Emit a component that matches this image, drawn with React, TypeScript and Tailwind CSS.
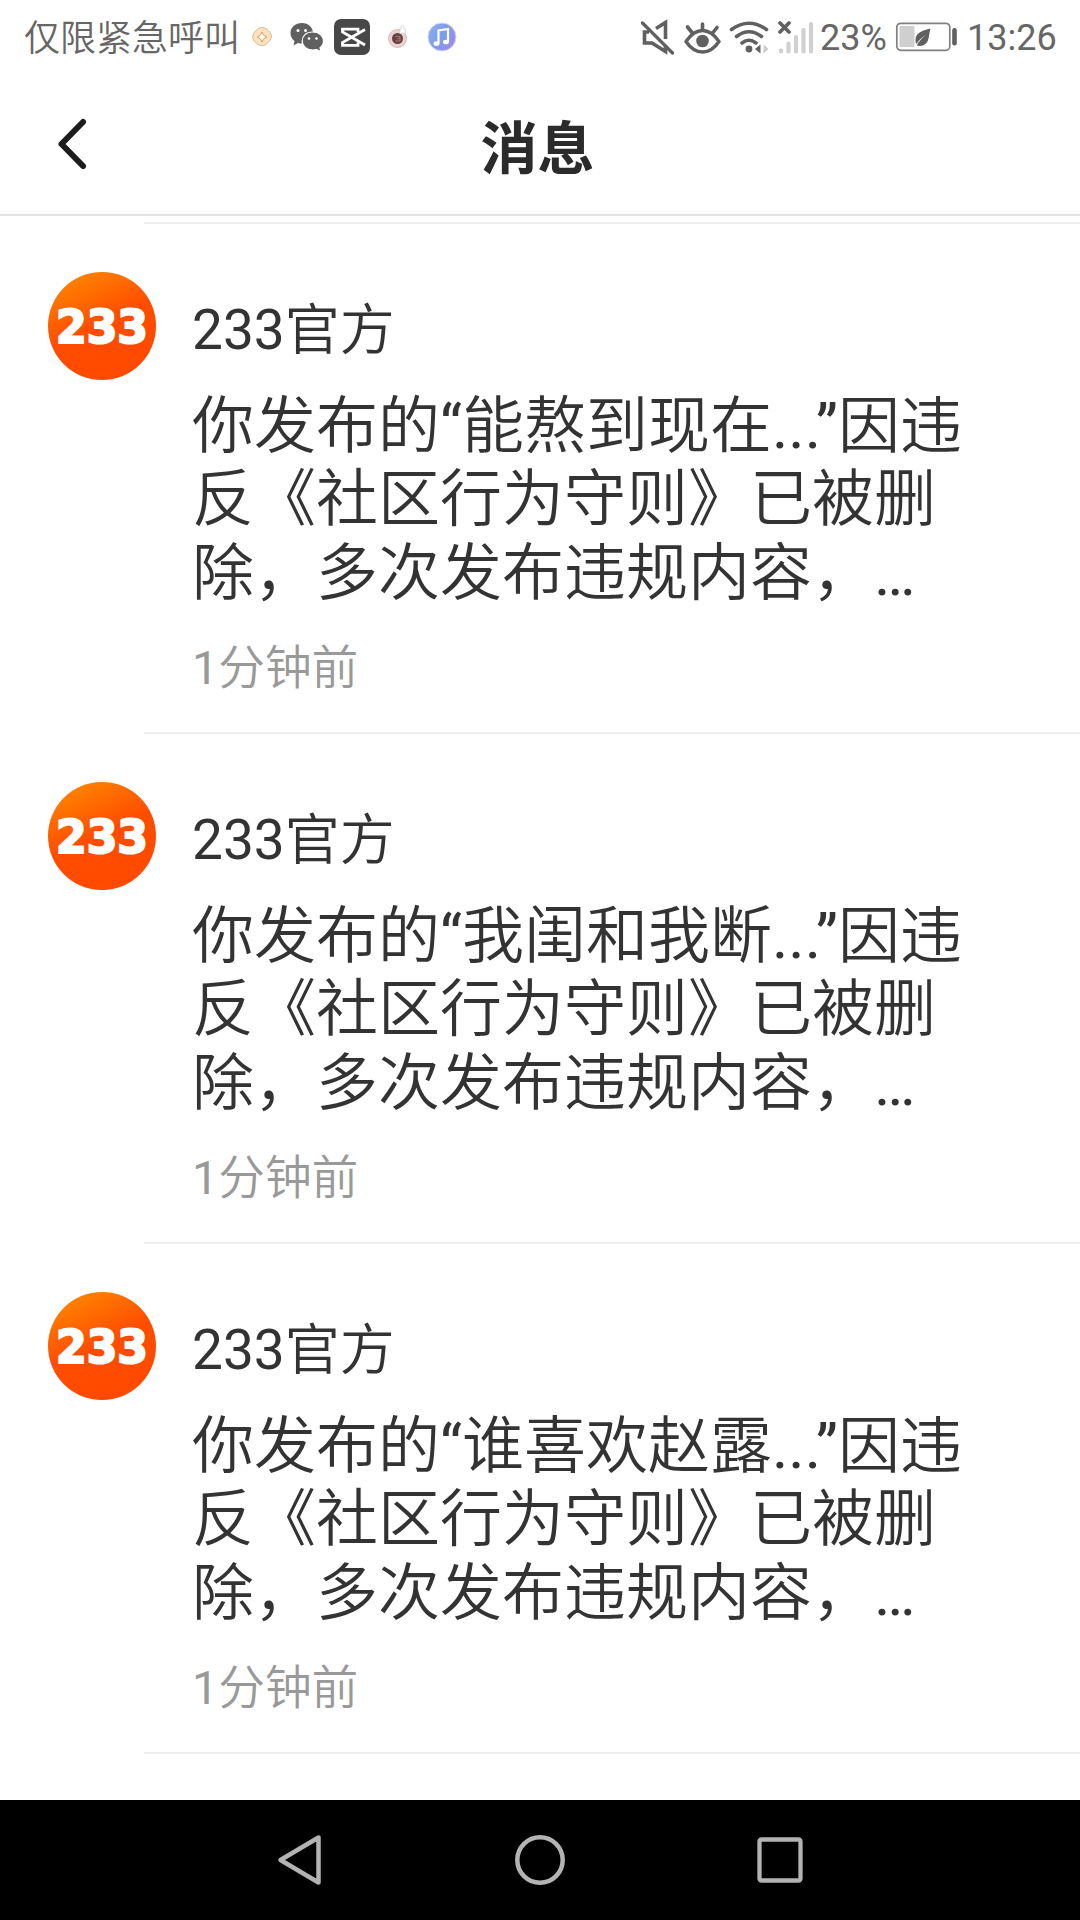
import React from "react";

const messages = [
  { id: 1, topic: "能熬到现在" },
  { id: 2, topic: "我闺和我断" },
  { id: 3, topic: "谁喜欢赵露" },
];

function CoinIcon() {
  return (
    <svg className="ml-[17px] h-[22px] w-[22px] shrink-0" viewBox="0 0 22 22">
      <path d="M7 2.500 Q11 0.500 15 2.500 Q21 7 20.500 11 Q20.500 14 15 18.500 Q11 21 7 18.500 Q1.500 15 1.500 11 Q1.500 7 7 2.500Z" fill="#fbe3c0" stroke="#dfb994" strokeWidth="1" />
      <path d="M11 6 Q12 10 16 11 Q12 12 11 16 Q10 12 6 11 Q10 10 11 6Z" fill="#fffaf0" stroke="#d6a36f" strokeWidth="1" />
    </svg>
  );
}

function WechatIcon() {
  return (
    <svg className="ml-[17px] h-[36px] w-[34px] shrink-0" viewBox="0 0 34 36">
      <path d="M12 4 C5 4 0.5 8.500 0.5 14 C0.500 17.500 2 20 4.500 22 L3.500 26.500 L8 24 C9.500 24.500 11 24.500 12.500 24.500 C19 24.500 23 20 23 14 C23 8.500 18.500 4 12 4Z" fill="#606060" />
      <path d="M22.500 13 C16 13 12.200 17 12.200 22 C12.200 27 16.500 31 22.500 31 C24 31 25.500 30.800 26.500 30.500 L31 32.800 L30 28.800 C32.300 27 33.500 24.500 33.500 22 C33.500 17 29 13 22.500 13Z" fill="#606060" stroke="#fff" strokeWidth="1.200" />
      <g fill="#fff">
        <circle cx="8" cy="11.500" r="1.500" />
        <circle cx="15.500" cy="11.500" r="1.500" />
        <circle cx="19" cy="19.500" r="1.300" />
        <circle cx="26.500" cy="19.500" r="1.300" />
      </g>
    </svg>
  );
}

function ClipIcon() {
  return (
    <svg className="ml-[10px] h-[36px] w-[36px] shrink-0" viewBox="0 0 36 36">
      <rect width="36" height="36" rx="7" fill="#474747" />
      <path d="M24 13 V10.200 H8.500 V13 L31 26 M24 23.500 V26.300 H8.500 V23.500 L31 10.500" fill="none" stroke="#fff" strokeWidth="2.800" />
    </svg>
  );
}

function RecorderIcon() {
  return (
    <svg className="ml-[17px] h-[26px] w-[21px] shrink-0" viewBox="0 0 21 26">
      <circle cx="10.500" cy="14.500" r="9" fill="#ead3d0" stroke="#dabbb7" />
      <circle cx="10.500" cy="14.500" r="5.500" fill="#664140" />
      <path d="M8.500 12.500 H13 V17 H8.500 M10 14.700 H13" fill="none" stroke="#a97b76" strokeWidth="1" />
      <path d="M13 9.500 V5 H14 V2 H17 V5 H18.500 V9.500Z" fill="#fff" stroke="#d4cfce" strokeWidth="0.700" />
    </svg>
  );
}

function MusicIcon() {
  return (
    <svg className="ml-[19px] h-[30px] w-[30px] shrink-0" viewBox="0 0 30 30">
      <defs>
        <linearGradient id="music" x1="0" y1="0" x2="1" y2="0.700">
          <stop offset="0" stopColor="#8bb0f0" />
          <stop offset="0.550" stopColor="#7c9ee8" />
          <stop offset="1" stopColor="#9b8be8" />
        </linearGradient>
      </defs>
      <circle cx="15" cy="15" r="14" fill="url(#music)" stroke="#e3cdfb" strokeWidth="1" />
      <path d="M11.500 21 V8.500 L21 7 V19.500" fill="none" stroke="#fff" strokeWidth="2.200" />
      <ellipse cx="9.500" cy="21.500" rx="3" ry="2.300" fill="#fff" />
      <ellipse cx="19" cy="20" rx="3" ry="2.300" fill="#fff" />
    </svg>
  );
}

function MuteIcon() {
  return (
    <svg className="h-[36px] w-[36px] shrink-0" viewBox="0 0 36 36" fill="none" stroke="#606060">
      <path d="M16 9.500 L25.500 3.500 V20 M9 13 H4.500 V24 H12 L25.500 32.500 V26" strokeWidth="3.600" />
      <path d="M2.500 4 L32.500 34" strokeWidth="3.200" strokeLinecap="round" />
    </svg>
  );
}

function EyeIcon() {
  return (
    <svg className="ml-[8px] h-[36px] w-[37px] shrink-0" viewBox="0 0 37 36" fill="none" stroke="#606060" strokeLinecap="round">
      <path d="M2 22.500 Q9.500 11.500 18.500 11.500 Q27.500 11.500 35 22.500 Q28 33 18.500 33 Q9 33 2 22.500Z" strokeWidth="3.400" strokeLinejoin="round" />
      <path d="M18.500 11 V5 M8 13.500 L3.500 8 M29 13.500 L33 8.500" strokeWidth="3.600" />
      <circle cx="18.500" cy="22" r="6.300" fill="#606060" stroke="none" />
    </svg>
  );
}

function WifiIcon() {
  return (
    <svg className="ml-[8px] h-[36px] w-[40px] shrink-0" viewBox="0 0 40 36" fill="none" stroke="#606060" strokeLinecap="round">
      <path d="M2.500 10.500 Q20 -2 37.500 10.500 M7.500 17.500 Q20 8 32.500 17.500 M13 24 Q20 18.500 27 24" strokeWidth="3.600" />
      <circle cx="20" cy="30" r="3.400" fill="#606060" stroke="none" />
      <path d="M31.500 25.500 V34.500 L26 30Z" fill="#606060" stroke="none" />
      <path d="M34.500 25.500 V34.500 L39.500 30Z" fill="#ccc" stroke="none" />
    </svg>
  );
}

function SignalIcon() {
  return (
    <svg className="ml-[9px] h-[36px] w-[36px] shrink-0" viewBox="0 0 36 36" fill="none" strokeLinecap="round">
      <path d="M2 4 L11 13 M11 4 L2 13" stroke="#606060" strokeWidth="3.600" />
      <path d="M3 31.500 V32.500 M10.500 24.500 V32.500 M18 18 V32.500 M25.500 11 V32.500 M33 5 V32.500" stroke="#d0d0d0" strokeWidth="4.200" />
    </svg>
  );
}

function BatteryIcon() {
  return (
    <svg className="h-[36px] w-[64px] shrink-0" viewBox="0 0 64 36">
      <rect x="2.800" y="4.300" width="53" height="27" rx="4" fill="none" stroke="#808080" strokeWidth="1.700" />
      <rect x="5.500" y="7" width="15" height="21" rx="1" fill="#cfcfcf" />
      <path d="M36.500 9.500 C29 11.500 21 13.500 21.500 21.500 C21.500 23 22 24 22.500 25 C25 20.500 29 17.500 32 16 C28 19 24.500 22.500 22.800 26.500 C26 27.500 31 27 33.500 22.500 C35.500 18.500 35 13.500 36.500 9.500Z" fill="#606060" />
      <rect x="58.200" y="9" width="4.600" height="17.500" rx="2.300" fill="#606060" />
    </svg>
  );
}

function StatusBar() {
  return (
    <div className="flex h-[74px] items-center text-[36px] leading-none text-[#666]">
      <span className="mt-[3px] ml-[24px] w-[217px] shrink-0 whitespace-nowrap">仅限紧急呼叫</span>
      <div className="flex flex-1 items-center">
        <div className="-ml-[7px] flex items-center">
          <CoinIcon />
          <WechatIcon />
          <ClipIcon />
          <RecorderIcon />
          <MusicIcon />
        </div>
      </div>
      <div className="flex items-center">
        <MuteIcon />
        <EyeIcon />
        <WifiIcon />
        <SignalIcon />
      </div>
      <span className="mt-[2px] ml-[6px] w-[74px] shrink-0 whitespace-nowrap">23%</span>
      <BatteryIcon />
      <span className="mt-[2px] ml-[9px] w-[113px] shrink-0 whitespace-nowrap">13:26</span>
    </div>
  );
}

function Header() {
  return (
    <header className="flex h-[142px] items-center border-b-2 border-[#e3e3e3] text-[#2b2b2b]">
      <svg className="ml-[54px] h-[60px] w-[38px]" viewBox="0 0 38 60" fill="none">
        <path d="M29 8 L7.500 30 L29 52" stroke="#1c1c1c" strokeWidth="6" strokeLinecap="round" strokeLinejoin="round" />
      </svg>
      <h1 className="flex-1 pr-[97px] text-center text-[57px] leading-none font-bold [font-family:'Noto_Sans_CJK_SC',sans-serif]">消息</h1>
    </header>
  );
}

function Avatar() {
  return (
    <div className="mt-[48px] ml-[48px] flex h-[108px] w-[108px] shrink-0 items-center justify-center rounded-full bg-linear-[155deg,#ff9100_0%,#ff4d00_48%,#ff4800_100%]">
      <svg className="h-[108px] w-[108px]" viewBox="0 0 108 108">
        <text
          x="8"
          y="70.500"
          textLength="92"
          lengthAdjust="spacingAndGlyphs"
          fill="#fff"
          stroke="#fff"
          strokeWidth="2.200"
          className="[font-family:'DejaVu_Sans',sans-serif] text-[45.500px] font-bold"
        >
          233
        </text>
      </svg>
    </div>
  );
}

function Message({ topic }: { topic: string }) {
  return (
    <article className="flex h-[508px]">
      <Avatar />
      <div className="ml-[36px] flex-1 text-[#333]">
        <h2 className="mt-[70px] text-[55px] leading-[72px] font-normal whitespace-nowrap">233官方</h2>
        <p className="mt-[24px] text-[62px] leading-[73.300px] whitespace-nowrap">
          你发布的“{topic}...”因违
          <br />
          反《社区行为守则》已被删
          <br />
          除，多次发布违规内容，…
        </p>
        <time className="mt-[28px] block text-[46.700px] leading-[60px] text-[#999]">1分钟前</time>
      </div>
    </article>
  );
}

function NavBar() {
  return (
    <nav className="flex h-[120px] shrink-0 items-center justify-between bg-black px-[270px] text-[#b3b3b3]">
      <svg className="h-[60px] w-[60px]" viewBox="0 0 60 60" fill="none" stroke="currentColor" strokeWidth="4.500" strokeLinejoin="round">
        <path d="M48.500 7.500 V52.500 L10.500 30Z" />
      </svg>
      <svg className="h-[60px] w-[60px]" viewBox="0 0 60 60" fill="none" stroke="currentColor" strokeWidth="4.500">
        <circle cx="30" cy="30" r="22.700" />
      </svg>
      <svg className="h-[60px] w-[60px]" viewBox="0 0 60 60" fill="none" stroke="currentColor" strokeWidth="4.300">
        <rect x="9.500" y="9.500" width="41" height="41" rx="2" />
      </svg>
    </nav>
  );
}

export default function App() {
  return (
    <div className="flex h-[1920px] w-[1080px] flex-col overflow-hidden bg-white [font-family:Roboto,'Noto_Sans_CJK_SC_DemiLight','Noto_Sans_CJK_SC',sans-serif]">
      <StatusBar />
      <Header />
      <main className="flex-1 overflow-hidden pt-[6px]">
        <div className="ml-[144px] h-[2px] bg-[#eee]" />
        {messages.map((m) => (
          <div key={m.id} className="h-[510px]">
            <Message topic={m.topic} />
            <div className="ml-[144px] h-[2px] bg-[#eee]" />
          </div>
        ))}
      </main>
      <NavBar />
    </div>
  );
}
